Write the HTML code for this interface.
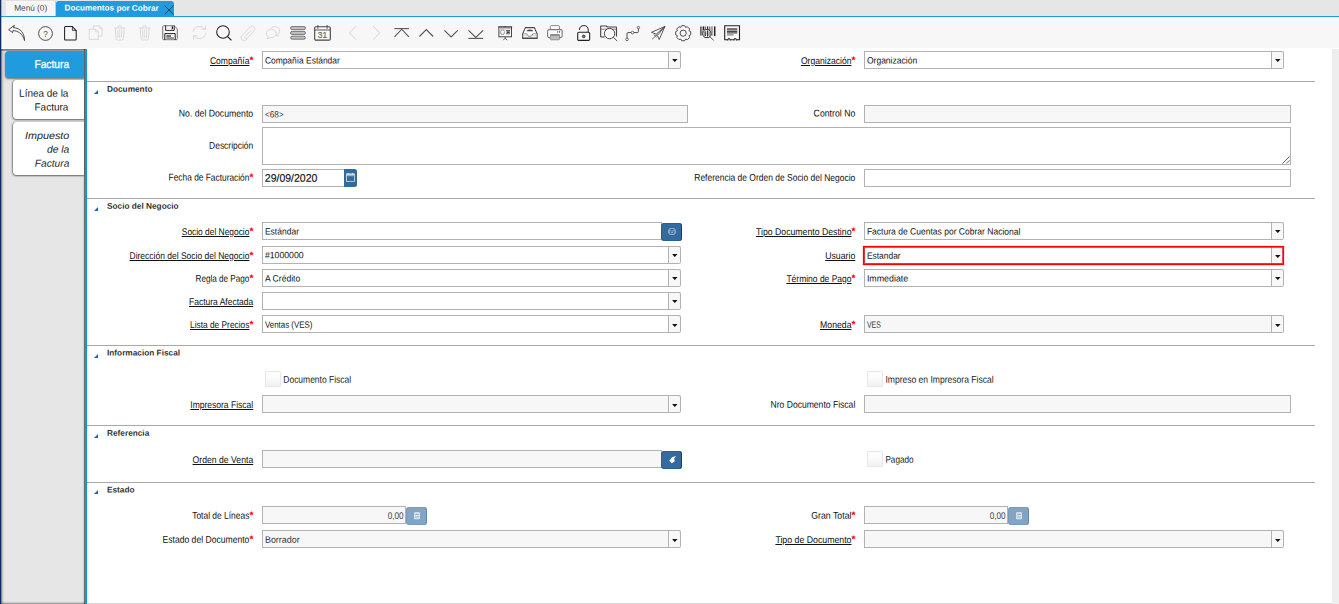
<!DOCTYPE html>
<html lang="es"><head><meta charset="utf-8"><title>Documentos por Cobrar</title>
<style>
html,body{margin:0;padding:0}
body{width:1339px;height:604px;position:relative;overflow:hidden;background:#fff;
 font-family:"Liberation Sans",sans-serif;}
.b{position:absolute;box-sizing:border-box}
.t{position:absolute;left:0;top:0;white-space:nowrap;line-height:12px;display:block;transform-origin:0 0;text-underline-offset:1px;text-decoration-thickness:1px}
.in{border:1px solid #b2b2b2;background:#fff}
.ro{background:#f7f7f7}
.cb{border:1px solid #b2b2b2;border-left:none;background:#f8f8f8;border-radius:0 2.2px 2.2px 0}
.ar{position:absolute;width:0;height:0;border-left:2.7px solid transparent;border-right:2.7px solid transparent;border-top:3px solid #111}
.sep{background:#a9a9a9;height:1px}
.chk{border:1px solid #e8e8e8;background:linear-gradient(#fdfdfd 30%,#f1f1f1);border-radius:1px}
.btn{background:#336b9e;border-radius:3px;box-shadow:inset -1px 0 0 rgba(8,40,85,.6),inset 0 0 0 1px rgba(15,60,100,.22)}
.btnd{background:#83a5c3;border-radius:3px;box-shadow:inset -1px 0 0 rgba(60,100,140,.35),inset 0 0 0 1px rgba(60,110,150,.18)}
.tri{position:absolute;width:0;height:0;border-left:4px solid transparent;border-bottom:4.2px solid #1c63c9}
svg{position:absolute;overflow:visible}
</style></head><body>

<div class="b" style="left:0.00px;top:0.00px;width:1339.00px;height:16.00px;background:#e6e6e6"></div>
<div class="b" style="left:0.00px;top:17.00px;width:1339.00px;height:31.00px;background:#f7f7f7"></div>
<div class="b" style="left:0.00px;top:15.80px;width:1339.00px;height:1.20px;background:#1f9bde"></div>
<div class="b" style="left:6.00px;top:1.00px;width:49.00px;height:15.00px;background:#f6f6f6;box-shadow:1px 0 1px rgba(0,0,0,.12)"></div>
<span class="t" style="font-size:8.25px;color:#4a4a4a;transform:translate(14.20px,2.70px) scaleX(0.9995) rotate(.03deg);">Menú (0)</span>
<div class="b" style="left:56.10px;top:0.90px;width:118.10px;height:16.10px;background:#1f9bde;border-radius:3px 3px 0 0"></div>
<span class="t" style="font-size:8.2px;color:#fff;font-weight:bold;transform:translate(64.60px,2.60px) scaleX(0.9992) rotate(.03deg);">Documentos por Cobrar</span>
<svg style="left:163.5px;top:4.6px" width="10" height="10" viewBox="0 0 10 10"><path d="M0.6 0.6 L9.6 9.4 M9.6 0.6 L0.6 9.4" stroke="#0c3a5a" stroke-width="0.9" fill="none"/></svg>
<div class="b" style="left:1.00px;top:49.00px;width:84.00px;height:555.00px;background:#e6e6e6;box-shadow:inset 3px 0 2px -1px rgba(0,0,0,.22),inset -1px 0 0 rgba(0,0,0,.44),inset -2px 0 1px rgba(0,0,0,.1),inset 0 -2px 2px -1px rgba(0,0,0,.4)"></div>
<div class="b" style="left:1.00px;top:49.00px;width:84.00px;height:1.00px;background:rgba(40,30,25,.5)"></div>
<div class="b" style="left:1.00px;top:50.00px;width:84.00px;height:1.00px;background:rgba(40,30,25,.38)"></div>
<div class="b" style="left:0.00px;top:0.00px;width:1.00px;height:604.00px;background:#0b2c5f"></div>
<div class="b" style="left:1.00px;top:0.00px;width:1.00px;height:604.00px;background:rgba(11,44,95,.3)"></div>
<div class="b" style="left:5.00px;top:51.00px;width:79.20px;height:25.80px;background:#1f9bde;border-radius:3.5px 0 0 3.5px;box-shadow:0 1.5px 2px rgba(0,0,0,.5)"></div>
<span class="t" style="font-size:11.4px;color:#fff;transform:translate(34.40px,58.00px) scaleX(0.9010) rotate(.03deg);-webkit-text-stroke:.3px #fff;">Factura</span>
<div class="b" style="left:12.80px;top:79.90px;width:71.40px;height:39.50px;background:#fff;border-radius:3.5px 0 0 3.5px;box-shadow:0 1px 2px rgba(0,0,0,.55),-1px 0 1.5px rgba(0,0,0,.3)"></div>
<span class="t" style="font-size:10.4px;color:#222;transform:translate(19.10px,87.80px) scaleX(0.9587) rotate(.03deg);">Línea de la</span>
<span class="t" style="font-size:10.4px;color:#222;transform:translate(34.50px,101.40px) scaleX(0.9621) rotate(.03deg);">Factura</span>
<div class="b" style="left:12.80px;top:122.10px;width:71.40px;height:53.30px;background:#fff;border-radius:3.5px 0 0 3.5px;box-shadow:0 1px 2px rgba(0,0,0,.55),-1px 0 1.5px rgba(0,0,0,.3)"></div>
<span class="t" style="font-size:10.2px;color:#222;font-style:italic;transform:translate(24.90px,129.90px) scaleX(1.0595) rotate(.03deg);">Impuesto</span>
<span class="t" style="font-size:10.2px;color:#222;font-style:italic;transform:translate(46.90px,143.80px) scaleX(1.0139) rotate(.03deg);">de la</span>
<span class="t" style="font-size:10.2px;color:#222;font-style:italic;transform:translate(34.80px,157.70px) scaleX(0.9986) rotate(.03deg);">Factura</span>
<div class="b" style="left:85.00px;top:48.80px;width:2.00px;height:555.20px;background:#0f97dc"></div>
<div class="b" style="left:1332.00px;top:48.80px;width:7.00px;height:555.20px;background:#eeeeee"></div>
<div class="b" style="left:87.00px;top:602.60px;width:1245.00px;height:1.40px;background:#d9d9d9"></div>
<svg style="left:7.80px;top:24.80px" width="17.2" height="16.1" viewBox="0 0 17.2 16.1"><path d="M6.1 0.5 L0.6 4.7 L4.6 7.6 L4.9 5.6 C9.5 5.6 14.8 8.6 16.6 15.6 C16.4 8.2 12.6 3 5.7 2.6 Z" fill="none" stroke-linecap="round" stroke-linejoin="round" stroke="#444" stroke-width="0.95"/></svg>
<svg style="left:38.20px;top:25.80px" width="15" height="15" viewBox="0 0 15 15"><circle cx="7.5" cy="7.5" r="6.9" fill="none" stroke="#444" stroke-width="0.95"/><text x="7.5" y="10.5" font-family="Liberation Sans, sans-serif" font-size="8.2" fill="#4a4a4a" text-anchor="middle">?</text></svg>
<svg style="left:64.15px;top:25.70px" width="12.8" height="14.6" viewBox="0 0 12.8 14.6"><path d="M0.6 1.4 Q0.6 0.6 1.4 0.6 L8.4 0.6 L12.2 4.6 L12.2 13.2 Q12.2 14 11.4 14 L1.4 14 Q0.6 14 0.6 13.2 Z" fill="none" stroke-linecap="round" stroke-linejoin="round" stroke="#222" stroke-width="1.05"/><path d="M8.4 0.8 L8.4 4.4 L12 4.4" fill="none" stroke-linecap="round" stroke-linejoin="round" stroke="#222" stroke-width="0.8"/></svg>
<svg style="left:88.80px;top:25.00px" width="13.6" height="15" viewBox="0 0 13.6 15"><path d="M4.4 3.6 L4.4 0.8 L10.4 0.8 L13 3.4 L13 11.2 L9.4 11.2" fill="none" stroke-linecap="round" stroke-linejoin="round" stroke="#d6d6d6" stroke-width="0.9"/><path d="M10.4 0.9 L10.4 3.4 L12.9 3.4" fill="none" stroke-linecap="round" stroke-linejoin="round" stroke="#d6d6d6" stroke-width="0.7"/><path d="M0.6 4.2 L6.6 4.2 L9.2 6.8 L9.2 14.4 L0.6 14.4 Z" fill="none" stroke-linecap="round" stroke-linejoin="round" stroke="#d6d6d6" stroke-width="0.9"/><path d="M6.6 4.3 L6.6 6.8 L9.1 6.8" fill="none" stroke-linecap="round" stroke-linejoin="round" stroke="#d6d6d6" stroke-width="0.7"/></svg>
<svg style="left:114.10px;top:25.00px" width="11.4" height="15.6" viewBox="0 0 11.4 15.6"><path d="M0.5 3 L10.9 3 M3.6 2.8 Q3.8 0.6 5.7 0.6 Q7.6 0.6 7.8 2.8" fill="none" stroke-linecap="round" stroke-linejoin="round" stroke="#d6d6d6" stroke-width="0.9"/><path d="M1.3 3.2 L2 13.8 Q2.1 15 3.2 15 L8.2 15 Q9.3 15 9.4 13.8 L10.1 3.2" fill="none" stroke-linecap="round" stroke-linejoin="round" stroke="#d6d6d6" stroke-width="0.9"/><path d="M3.7 5 L3.9 13 M5.7 5 L5.7 13 M7.7 5 L7.5 13" fill="none" stroke-linecap="round" stroke-linejoin="round" stroke="#d6d6d6" stroke-width="0.8"/></svg>
<svg style="left:139.20px;top:25.00px" width="11.4" height="15.6" viewBox="0 0 11.4 15.6"><path d="M0.5 3 L10.9 3 M3.6 2.8 Q3.8 0.6 5.7 0.6 Q7.6 0.6 7.8 2.8" fill="none" stroke-linecap="round" stroke-linejoin="round" stroke="#d6d6d6" stroke-width="0.9"/><path d="M1.3 3.2 L2 13.8 Q2.1 15 3.2 15 L8.2 15 Q9.3 15 9.4 13.8 L10.1 3.2" fill="none" stroke-linecap="round" stroke-linejoin="round" stroke="#d6d6d6" stroke-width="0.9"/><path d="M3.7 5 L3.9 13 M5.7 5 L5.7 13 M7.7 5 L7.5 13" fill="none" stroke-linecap="round" stroke-linejoin="round" stroke="#d6d6d6" stroke-width="0.8"/></svg>
<svg style="left:161.70px;top:25.15px" width="16" height="15.4" viewBox="0 0 16 15.4"><path d="M1.6 0.7 L12 0.7 L15.3 3.8 L15.3 13.7 Q15.3 14.7 14.3 14.7 L1.6 14.7 Q0.7 14.7 0.7 13.7 L0.7 1.7 Q0.7 0.7 1.6 0.7 Z" fill="#f6f6f6" stroke="#707070" stroke-width="0.95" stroke-linejoin="round"/><path d="M3.6 0.9 L3.6 5.4 L12.2 5.4 L12.2 0.9" fill="none" stroke-linecap="round" stroke-linejoin="round" stroke="#222" stroke-width="0.95"/><rect x="9.7" y="1.4" width="1.3" height="2.8" fill="#222"/><path d="M2.8 14.5 L2.8 8.6 L13.2 8.6 L13.2 14.5" fill="none" stroke-linecap="round" stroke-linejoin="round" stroke="#222" stroke-width="1.0"/><rect x="4.4" y="12" width="7.4" height="2.5" fill="#9a9a9a"/><rect x="4.4" y="10.4" width="4.6" height="1.2" fill="#222"/></svg>
<svg style="left:191.50px;top:25.20px" width="15" height="15" viewBox="0 0 15 15"><path d="M1 6.6 A6.6 6.6 0 0 1 13 4.2 M14 8.4 A6.6 6.6 0 0 1 2 10.8" fill="none" stroke-linecap="round" stroke-linejoin="round" stroke="#d6d6d6" stroke-width="0.9"/><path d="M13.6 0.8 L13.4 4.4 L9.8 4.2 M1.4 14.2 L1.6 10.6 L5.2 10.8" fill="none" stroke-linecap="round" stroke-linejoin="round" stroke="#d6d6d6" stroke-width="0.9"/></svg>
<svg style="left:215.60px;top:25.00px" width="15.6" height="15.6" viewBox="0 0 15.6 15.6"><circle cx="7" cy="7" r="6.3" fill="none" stroke="#222" stroke-width="1.05"/><path d="M11.6 11.6 L15.1 15" fill="none" stroke-linecap="round" stroke-linejoin="round" stroke="#222" stroke-width="1.1"/></svg>
<svg style="left:240.40px;top:25.00px" width="15.6" height="16" viewBox="0 0 15.6 16"><path d="M11.2 5.4 L5.2 11.4 Q4.2 12.6 5.2 13.4 Q6.2 14.2 7.2 13.2 L14.2 5.8 Q16 3.6 14.2 1.8 Q12.2 0 10.2 2 L2.2 10.2 Q-0.4 13 2 15 Q4.6 16.8 7 14.4" fill="none" stroke-linecap="round" stroke-linejoin="round" stroke="#d6d6d6" stroke-width="0.9"/></svg>
<svg style="left:265.40px;top:25.90px" width="15" height="13.6" viewBox="0 0 15 13.6"><path d="M5.4 2.8 A5 4.4 0 1 1 12.6 8.6 L13.4 10.2 L11 9.4" fill="none" stroke-linecap="round" stroke-linejoin="round" stroke="#d6d6d6" stroke-width="0.9"/><path d="M2.2 12.8 L3 10.6 A4.9 4.2 0 1 1 5.2 11.6 Z" fill="#f7f7f7" stroke="#d6d6d6" stroke-width="0.9" stroke-linejoin="round"/></svg>
<svg style="left:290.00px;top:26.00px" width="16" height="13.8" viewBox="0 0 16 13.8"><rect x="0.6" y="0.6" width="14.8" height="3.0" rx="1.5" fill="#c2c2c2" stroke="#555" stroke-width="0.75"/><rect x="0.6" y="5.4" width="14.8" height="3.0" rx="1.5" fill="#c2c2c2" stroke="#555" stroke-width="0.75"/><rect x="0.6" y="10.2" width="14.8" height="3.0" rx="1.5" fill="#c2c2c2" stroke="#555" stroke-width="0.75"/></svg>
<svg style="left:313.95px;top:25.10px" width="17" height="15.8" viewBox="0 0 17 15.8"><rect x="0.7" y="1.7" width="15.6" height="13.4" rx="1.2" fill="#fafafa" stroke="#444" stroke-width="1.1"/><path d="M0.8 5 L16.2 5" stroke="#444" stroke-width="0.9"/><path d="M3.9 0.4 L3.9 3.4 M13.1 0.4 L13.1 3.4" stroke="#444" stroke-width="0.9" stroke-linecap="round"/><text x="8.5" y="13.4" font-family="Liberation Sans, sans-serif" font-size="8.4" fill="#666" text-anchor="middle" stroke="#666" stroke-width="0.2">31</text></svg>
<svg style="left:348.60px;top:26.00px" width="7.2" height="13.8" viewBox="0 0 7.2 13.8"><path d="M6.8 0.4 L0.5 6.9 L6.8 13.4" fill="none" stroke-linecap="round" stroke-linejoin="round" stroke="#cfcfcf" stroke-width="0.9"/></svg>
<svg style="left:372.80px;top:26.00px" width="7.2" height="13.8" viewBox="0 0 7.2 13.8"><path d="M0.4 0.4 L6.7 6.9 L0.4 13.4" fill="none" stroke-linecap="round" stroke-linejoin="round" stroke="#cfcfcf" stroke-width="0.9"/></svg>
<svg style="left:393.70px;top:27.60px" width="15.4" height="9.4" viewBox="0 0 15.4 9.4"><path d="M0.4 0.6 L15 0.6" stroke="#555" stroke-width="1.1"/><path d="M0.5 8.9 L7.7 1.2 L14.9 8.9" fill="none" stroke="#555" stroke-width="1.1" stroke-linejoin="miter"/></svg>
<svg style="left:418.70px;top:29.05px" width="14.6" height="7.9" viewBox="0 0 14.6 7.9"><path d="M0.4 7.5 L7.3 0.5 L14.2 7.5" fill="none" stroke="#555" stroke-width="1.1"/></svg>
<svg style="left:443.70px;top:29.50px" width="14.2" height="7.4" viewBox="0 0 14.2 7.4"><path d="M0.4 0.4 L7.1 7 L13.8 0.4" fill="none" stroke="#555" stroke-width="1.1"/></svg>
<svg style="left:467.70px;top:29.90px" width="15.6" height="9" viewBox="0 0 15.6 9"><path d="M0.5 0.4 L7.8 7.4 L15.1 0.4" fill="none" stroke="#555" stroke-width="1.1"/><path d="M0.4 8.4 L15.2 8.4" stroke="#555" stroke-width="1.1"/></svg>
<svg style="left:497.80px;top:25.70px" width="14.4" height="14.6" viewBox="0 0 14.4 14.6"><path d="M0.3 0.9 L14.1 0.9" stroke="#444" stroke-width="1.3"/><rect x="6.4" y="0" width="1.6" height="0.8" fill="#444"/><rect x="0.9" y="1.4" width="12.6" height="9.4" fill="#fafafa" stroke="#444" stroke-width="1"/><rect x="1.4" y="1.6" width="11.6" height="1.9" fill="#c4c4c4"/><rect x="2.7" y="3.9" width="3.6" height="4.6" rx="1.4" fill="#fff" stroke="#8a8a8a" stroke-width="0.9"/><path d="M8 4.6 L12 4.6 M8 7.8 L11.8 7.8" stroke="#666" stroke-width="1.1"/><rect x="8.6" y="5.4" width="3.2" height="1.8" fill="#444"/><path d="M7.2 11 L7.2 12.4 M5.2 14.2 L7.2 12.2 L9.2 14.2" fill="none" stroke="#444" stroke-width="0.9"/></svg>
<svg style="left:521.70px;top:27.00px" width="15.8" height="12" viewBox="0 0 15.8 12"><path d="M3.4 0.6 L12.4 0.6 L15.2 7 L15.2 11.3 L0.6 11.3 L0.6 7 Z" fill="#fbfbfb" stroke="#444" stroke-width="1.05" stroke-linejoin="round"/><path d="M4.8 3.6 Q7.9 1.6 11 3.6 L11 4.3 L4.8 4.3 Z" fill="#444"/><path d="M0.8 6.8 L5 6.8 Q5.4 9.6 7.9 9.6 Q10.4 9.6 10.8 6.8 L15 6.8" fill="none" stroke="#8a8a8a" stroke-width="0.9"/><path d="M0.7 8.7 L15.1 8.7" stroke="#c4c4c4" stroke-width="0.8"/><path d="M0.6 11.3 L15.2 11.3" stroke="#444" stroke-width="1.2"/></svg>
<svg style="left:546.70px;top:25.15px" width="15.8" height="15.4" viewBox="0 0 15.8 15.4"><path d="M3.3 4.6 L3.3 1.4 Q3.3 0.6 4.1 0.6 L11.7 0.6 Q12.5 0.6 12.5 1.4 L12.5 4.6" fill="#fbfbfb" stroke="#8c8c8c" stroke-width="1"/><rect x="0.6" y="4.6" width="14.6" height="8" rx="1.6" fill="#fbfbfb" stroke="#7a7a7a" stroke-width="1.1"/><rect x="10.2" y="6.4" width="1.1" height="1.1" fill="#2a2a2a"/><rect x="12" y="6.4" width="1.1" height="1.1" fill="#2a2a2a"/><path d="M3.2 10 L12.6 10" stroke="#444" stroke-width="1.2"/><path d="M3.3 10.4 L3.3 14 Q3.3 14.8 4.1 14.8 L11.7 14.8 Q12.5 14.8 12.5 14 L12.5 10.4 Z" fill="#bdbdbd" stroke="#8c8c8c" stroke-width="0.9"/></svg>
<svg style="left:576.80px;top:24.80px" width="13.4" height="16.1" viewBox="0 0 13.4 16.1"><path d="M2.4 4.6 Q2.6 0.6 6.9 0.6 Q11.2 0.6 11.2 5 L11.2 7.2" fill="none" stroke="#222" stroke-width="1.0" stroke-linecap="round"/><rect x="0.7" y="7.3" width="12" height="8.1" rx="1.2" fill="#fafafa" stroke="#222" stroke-width="1.1"/><circle cx="6.7" cy="11.4" r="1.4" fill="#777" stroke="#222" stroke-width="0.7"/></svg>
<svg style="left:599.90px;top:25.00px" width="17.2" height="16" viewBox="0 0 17.2 16"><path d="M0.7 12 L0.7 1 L6.2 1 L7.4 2 L16 2 Q16.5 2 16.5 2.6 L16.5 11.6" fill="none" stroke="#444" stroke-width="1.1" stroke-linejoin="round"/><path d="M0.8 4.2 L16.4 4.2" stroke="#777" stroke-width="0.9"/><path d="M0.7 12 L4.6 12" stroke="#444" stroke-width="1.1"/><circle cx="9.6" cy="8.6" r="5.2" fill="#f9f9f9" stroke="#444" stroke-width="1"/><path d="M13.6 12.6 L16.9 15.7" stroke="#444" stroke-width="0.95" stroke-linecap="round"/></svg>
<svg style="left:625.20px;top:25.50px" width="15" height="15" viewBox="0 0 15 15"><path d="M2 12.2 L2 7.6 Q2 6.6 3 6.6 L6.2 6.6 M8.8 6.6 L12.4 6.6 Q13.4 6.6 13.4 5.6 L13.4 3" fill="none" stroke="#444" stroke-width="0.95"/><circle cx="7.5" cy="6.6" r="1.3" fill="#fff" stroke="#444" stroke-width="0.8"/><circle cx="13.4" cy="1.6" r="1.2" fill="#fff" stroke="#444" stroke-width="0.8"/><circle cx="2" cy="13.4" r="1.3" fill="#fff" stroke="#444" stroke-width="0.8"/></svg>
<svg style="left:650.90px;top:25.60px" width="14.4" height="14.4" viewBox="0 0 14.4 14.4"><path d="M13.9 0.5 L0.5 6.3 L5.2 8.2 L13.9 0.5 L8.2 13.6 L6.4 9.4 Z" fill="none" stroke="#444" stroke-width="0.9" stroke-linejoin="round"/><path d="M1.4 13 L6.2 8.6 M3 8.8 L5.4 10.8" stroke="#444" stroke-width="0.8" stroke-linecap="round"/></svg>
<svg style="left:674.50px;top:24.75px" width="16.4" height="16.4" viewBox="0 0 16.4 16.4"><path d="M6.67 0.65 L9.73 0.65 L10.60 2.37 L10.63 2.39 L12.45 1.78 L14.62 3.95 L14.01 5.77 L14.03 5.80 L15.75 6.67 L15.75 9.73 L14.03 10.60 L14.01 10.63 L14.62 12.45 L12.45 14.62 L10.63 14.01 L10.60 14.03 L9.73 15.75 L6.67 15.75 L5.80 14.03 L5.77 14.01 L3.95 14.62 L1.78 12.45 L2.39 10.63 L2.37 10.60 L0.65 9.73 L0.65 6.67 L2.37 5.80 L2.39 5.77 L1.78 3.95 L3.95 1.78 L5.77 2.39 L5.80 2.37 Z" fill="none" stroke="#444" stroke-width="0.95" stroke-linejoin="round"/><circle cx="8.2" cy="8.2" r="3.1" fill="none" stroke="#444" stroke-width="0.95"/></svg>
<svg style="left:699.80px;top:25.70px" width="15.8" height="14.6" viewBox="0 0 15.8 14.6"><path d="M0.9 0.4 L0.9 9.6" stroke="#333" stroke-width="1.3"/><path d="M2.3 0.4 L2.3 9.2" stroke="#999" stroke-width="0.9"/><path d="M3.6 0.4 L3.6 4" stroke="#222" stroke-width="1.4"/><path d="M5.6 0.4 L5.6 3.2" stroke="#555" stroke-width="0.9"/><path d="M7.6 0.4 L7.6 3.4" stroke="#333" stroke-width="1.3"/><path d="M9.8 0.4 L9.8 4.4" stroke="#555" stroke-width="1.1"/><path d="M12 0.4 L12 9.6" stroke="#555" stroke-width="1"/><path d="M14.7 0.4 L14.7 10" stroke="#222" stroke-width="1.5"/><circle cx="6.9" cy="7.6" r="4.1" fill="#f1f1f1" stroke="#2a2a2a" stroke-width="1"/><path d="M5.2 5.2 L5.2 10 M7.6 4.6 L7.6 10.6" stroke="#333" stroke-width="1.3"/><path d="M9.4 5.4 L9.4 9.8" stroke="#777" stroke-width="0.8"/><path d="M10 10.8 L13.4 14.2" stroke="#444" stroke-width="0.9" stroke-linecap="round"/></svg>
<svg style="left:724.00px;top:24.80px" width="16.2" height="16.1" viewBox="0 0 16.2 16.1"><path d="M0.7 14.7 L0.7 0.7 L15.5 0.7 L15.5 14.7 L12.3 14.7 Q12 13.5 11.2 13.5 Q10.4 13.5 10.1 14.7 L6.1 14.7 Q5.8 13.5 5 13.5 Q4.2 13.5 3.9 14.7 Z" fill="#fafafa" stroke="#222" stroke-width="1.1" stroke-linejoin="miter"/><path d="M2.9 3.7 L13.3 3.7 M2.9 5.1 L13.3 5.1 M2.9 6.5 L13.3 6.5 M2.9 7.9 L13.3 7.9" stroke="#4a4a4a" stroke-width="1.05"/><path d="M2.9 9.9 L9.6 9.9" stroke="#555" stroke-width="0.9"/><path d="M3.6 15.6 L4.2 14.9 M10.4 14.9 L9.9 15.6 M5.8 14.9 L6.4 15.6 M12.1 14.9 L12.7 15.6" stroke="#222" stroke-width="0.7"/></svg>
<span class="t" style="font-size:9.76px;color:#111;text-decoration:underline;transform:translate(209.90px,55.00px) scaleX(0.8781) rotate(.03deg);">Compañía</span>
<span class="t" style="font-size:10.2px;color:#f00;font-weight:bold;transform:translate(249.50px,54.60px) scaleX(1.0000) rotate(.03deg);">*</span>
<div class="b in" style="left:262.00px;top:51.00px;width:407.00px;height:18.00px;"></div>
<div class="b cb" style="left:669.00px;top:51.00px;width:12.00px;height:18.00px;"></div>
<svg style="left:671.70px;top:59.30px" width="5.6" height="3" viewBox="0 0 5.6 3"><path d="M0.1 0 L5.5 0 L3.1 2.8 Q2.8 3.1 2.5 2.8 Z" fill="#111"/></svg>
<span class="t" style="font-size:9.2px;color:#111;transform:translate(264.90px,54.55px) scaleX(0.9166) rotate(.03deg);">Compañía Estándar</span>
<span class="t" style="font-size:9.76px;color:#111;text-decoration:underline;transform:translate(800.90px,55.00px) scaleX(0.8807) rotate(.03deg);">Organización</span>
<span class="t" style="font-size:10.2px;color:#f00;font-weight:bold;transform:translate(851.60px,54.60px) scaleX(1.0000) rotate(.03deg);">*</span>
<div class="b in" style="left:864.00px;top:51.00px;width:408.00px;height:18.00px;"></div>
<div class="b cb" style="left:1272.00px;top:51.00px;width:12.00px;height:18.00px;"></div>
<svg style="left:1274.70px;top:59.30px" width="5.6" height="3" viewBox="0 0 5.6 3"><path d="M0.1 0 L5.5 0 L3.1 2.8 Q2.8 3.1 2.5 2.8 Z" fill="#111"/></svg>
<span class="t" style="font-size:9.2px;color:#111;transform:translate(866.90px,54.55px) scaleX(0.9291) rotate(.03deg);">Organización</span>
<div class="b sep" style="left:87.00px;top:80.90px;width:1228.00px;height:1.00px;"></div>
<i class="tri" style="left:94px;top:89.70px"></i>
<span class="t" style="font-size:8.27px;color:#333;font-weight:bold;transform:translate(107.00px,83.70px) scaleX(1.0000) rotate(.03deg);">Documento</span>
<span class="t" style="font-size:9.76px;color:#111;transform:translate(178.80px,107.60px) scaleX(0.8914) rotate(.03deg);">No. del Documento</span>
<div class="b in ro" style="left:262.00px;top:105.00px;width:426.00px;height:18.00px;"></div>
<span class="t" style="font-size:9.2px;color:#333;transform:translate(264.90px,108.40px) scaleX(0.8925) rotate(.03deg);">&lt;68&gt;</span>
<span class="t" style="font-size:9.76px;color:#111;transform:translate(813.60px,107.60px) scaleX(0.8947) rotate(.03deg);">Control No</span>
<div class="b in ro" style="left:864.00px;top:105.00px;width:427.00px;height:18.00px;"></div>
<span class="t" style="font-size:9.76px;color:#111;transform:translate(209.10px,139.70px) scaleX(0.8658) rotate(.03deg);">Descripción</span>
<div class="b in" style="left:262.00px;top:127.00px;width:1029.00px;height:38.00px;"></div>
<svg style="left:1281.5px;top:155.5px" width="8" height="8" viewBox="0 0 8 8"><path d="M0.5 7.5 L7.5 0.5 M4.3 7.5 L7.5 4.3" stroke="#444" stroke-width="0.8" fill="none"/></svg>
<span class="t" style="font-size:9.76px;color:#111;transform:translate(168.60px,171.60px) scaleX(0.8567) rotate(.03deg);">Fecha de Facturación</span>
<span class="t" style="font-size:10.2px;color:#f00;font-weight:bold;transform:translate(249.50px,171.40px) scaleX(1.0000) rotate(.03deg);">*</span>
<div class="b in" style="left:262.20px;top:169.30px;width:82.80px;height:17.40px;"></div>
<div class="b" style="left:344.20px;top:169.30px;width:12.60px;height:17.40px;background:#336a9c;border-radius:0 2.5px 2.5px 0"></div>
<svg style="left:345.9px;top:173.2px" width="8.8" height="8.8" viewBox="0 0 8.8 8.8"><rect x="0.4" y="0.8" width="8" height="7.5" fill="none" stroke="#e3ebf3" stroke-width="0.75"/><path d="M0.4 2.7 L8.4 2.7" stroke="#e3ebf3" stroke-width="0.7"/><path d="M0.6 1.5 L8.2 1.5" stroke="#c6d6e6" stroke-width="1"/><path d="M2.3 0.2 L2.3 1.6 M6.5 0.2 L6.5 1.6" stroke="#f2f6fa" stroke-width="0.8"/></svg>
<span class="t" style="font-size:11.0px;color:#111;transform:translate(264.80px,171.80px) scaleX(0.9553) rotate(.03deg);-webkit-text-stroke:.15px #111;">29/09/2020</span>
<span class="t" style="font-size:9.76px;color:#111;transform:translate(694.30px,171.80px) scaleX(0.8685) rotate(.03deg);">Referencia de Orden de Socio del Negocio</span>
<div class="b in" style="left:864.00px;top:169.00px;width:427.00px;height:18.00px;"></div>
<div class="b sep" style="left:87.00px;top:197.90px;width:1228.00px;height:1.00px;"></div>
<i class="tri" style="left:94px;top:206.70px"></i>
<span class="t" style="font-size:8.27px;color:#333;font-weight:bold;transform:translate(107.00px,200.70px) scaleX(1.0000) rotate(.03deg);">Socio del Negocio</span>
<span class="t" style="font-size:9.76px;color:#111;text-decoration:underline;transform:translate(181.80px,226.00px) scaleX(0.8601) rotate(.03deg);">Socio del Negocio</span>
<span class="t" style="font-size:10.2px;color:#f00;font-weight:bold;transform:translate(249.50px,225.60px) scaleX(1.0000) rotate(.03deg);">*</span>
<div class="b in" style="left:262.00px;top:222.00px;width:400.00px;height:18.00px;"></div>
<span class="t" style="font-size:9.2px;color:#111;transform:translate(264.90px,225.40px) scaleX(0.9271) rotate(.03deg);">Estándar</span>
<div class="b btn" style="left:661.00px;top:223.00px;width:21.00px;height:18.00px;"></div>
<svg style="left:668px;top:228.1px" width="8" height="7" viewBox="0 0 8 7"><rect x="0.4" y="0.4" width="7.2" height="6.2" rx="3.2" ry="2.9" fill="none" stroke="#b4c9de" stroke-width="0.8"/><path d="M1.6 1.6 L1.6 5.2 M6.2 1.6 L6.2 5.2 M2.8 2 L2.8 3.6 Q2.8 5.4 4.4 5.2 L5 2" fill="none" stroke="#a9c0d7" stroke-width="0.6"/></svg>
<span class="t" style="font-size:9.76px;color:#111;text-decoration:underline;transform:translate(756.00px,226.00px) scaleX(0.8929) rotate(.03deg);">Tipo Documento Destino</span>
<span class="t" style="font-size:10.2px;color:#f00;font-weight:bold;transform:translate(851.60px,225.60px) scaleX(1.0000) rotate(.03deg);">*</span>
<div class="b in" style="left:864.00px;top:222.00px;width:408.00px;height:18.00px;"></div>
<div class="b cb" style="left:1272.00px;top:222.00px;width:12.00px;height:18.00px;"></div>
<svg style="left:1274.70px;top:230.30px" width="5.6" height="3" viewBox="0 0 5.6 3"><path d="M0.1 0 L5.5 0 L3.1 2.8 Q2.8 3.1 2.5 2.8 Z" fill="#111"/></svg>
<span class="t" style="font-size:9.2px;color:#111;transform:translate(866.90px,225.55px) scaleX(0.9283) rotate(.03deg);">Factura de Cuentas por Cobrar Nacional</span>
<span class="t" style="font-size:9.76px;color:#111;text-decoration:underline;transform:translate(129.50px,250.00px) scaleX(0.8709) rotate(.03deg);">Dirección del Socio del Negocio</span>
<span class="t" style="font-size:10.2px;color:#f00;font-weight:bold;transform:translate(249.50px,249.70px) scaleX(1.0000) rotate(.03deg);">*</span>
<div class="b in" style="left:262.00px;top:246.00px;width:407.00px;height:18.00px;"></div>
<div class="b cb" style="left:669.00px;top:246.00px;width:12.00px;height:18.00px;"></div>
<svg style="left:671.70px;top:254.00px" width="5.6" height="3" viewBox="0 0 5.6 3"><path d="M0.1 0 L5.5 0 L3.1 2.8 Q2.8 3.1 2.5 2.8 Z" fill="#111"/></svg>
<span class="t" style="font-size:9.2px;color:#111;transform:translate(264.90px,249.25px) scaleX(0.9464) rotate(.03deg);">#1000000</span>
<span class="t" style="font-size:9.76px;color:#111;text-decoration:underline;transform:translate(825.20px,250.00px) scaleX(0.8956) rotate(.03deg);">Usuario</span>
<div class="b in" style="left:864.00px;top:246.00px;width:408.00px;height:18.00px;"></div>
<div class="b cb" style="left:1272.00px;top:246.00px;width:12.00px;height:18.00px;"></div>
<svg style="left:1274.70px;top:254.50px" width="5.6" height="3" viewBox="0 0 5.6 3"><path d="M0.1 0 L5.5 0 L3.1 2.8 Q2.8 3.1 2.5 2.8 Z" fill="#111"/></svg>
<span class="t" style="font-size:9.2px;color:#111;transform:translate(866.90px,249.75px) scaleX(0.9189) rotate(.03deg);">Estandar</span>
<div class="b" style="left:863.00px;top:246.00px;width:421.00px;height:19.00px;border:1px solid #f00;box-shadow:inset 0 0 0 1px rgba(255,0,0,.7),0 0 0 1px rgba(255,0,0,.12)"></div>
<span class="t" style="font-size:9.76px;color:#111;transform:translate(195.50px,272.80px) scaleX(0.8355) rotate(.03deg);">Regla de Pago</span>
<span class="t" style="font-size:10.2px;color:#f00;font-weight:bold;transform:translate(249.50px,272.60px) scaleX(1.0000) rotate(.03deg);">*</span>
<div class="b in" style="left:262.00px;top:269.00px;width:407.00px;height:18.00px;"></div>
<div class="b cb" style="left:669.00px;top:269.00px;width:12.00px;height:18.00px;"></div>
<svg style="left:671.70px;top:277.20px" width="5.6" height="3" viewBox="0 0 5.6 3"><path d="M0.1 0 L5.5 0 L3.1 2.8 Q2.8 3.1 2.5 2.8 Z" fill="#111"/></svg>
<span class="t" style="font-size:9.2px;color:#111;transform:translate(264.90px,272.45px) scaleX(0.9366) rotate(.03deg);">A Crédito</span>
<span class="t" style="font-size:9.76px;color:#111;text-decoration:underline;transform:translate(786.40px,273.00px) scaleX(0.8704) rotate(.03deg);">Término de Pago</span>
<span class="t" style="font-size:10.2px;color:#f00;font-weight:bold;transform:translate(851.60px,272.60px) scaleX(1.0000) rotate(.03deg);">*</span>
<div class="b in" style="left:864.00px;top:269.00px;width:408.00px;height:18.00px;"></div>
<div class="b cb" style="left:1272.00px;top:269.00px;width:12.00px;height:18.00px;"></div>
<svg style="left:1274.70px;top:277.20px" width="5.6" height="3" viewBox="0 0 5.6 3"><path d="M0.1 0 L5.5 0 L3.1 2.8 Q2.8 3.1 2.5 2.8 Z" fill="#111"/></svg>
<span class="t" style="font-size:9.2px;color:#111;transform:translate(866.90px,272.45px) scaleX(0.9626) rotate(.03deg);">Immediate</span>
<span class="t" style="font-size:9.76px;color:#111;text-decoration:underline;transform:translate(189.00px,296.00px) scaleX(0.8709) rotate(.03deg);">Factura Afectada</span>
<div class="b in" style="left:262.00px;top:292.00px;width:407.00px;height:18.00px;"></div>
<div class="b cb" style="left:669.00px;top:292.00px;width:12.00px;height:18.00px;"></div>
<svg style="left:671.70px;top:300.30px" width="5.6" height="3" viewBox="0 0 5.6 3"><path d="M0.1 0 L5.5 0 L3.1 2.8 Q2.8 3.1 2.5 2.8 Z" fill="#111"/></svg>
<span class="t" style="font-size:9.76px;color:#111;text-decoration:underline;transform:translate(190.00px,319.00px) scaleX(0.8562) rotate(.03deg);">Lista de Precios</span>
<span class="t" style="font-size:10.2px;color:#f00;font-weight:bold;transform:translate(249.50px,318.80px) scaleX(1.0000) rotate(.03deg);">*</span>
<div class="b in" style="left:262.00px;top:315.00px;width:407.00px;height:18.00px;"></div>
<div class="b cb" style="left:669.00px;top:315.00px;width:12.00px;height:18.00px;"></div>
<svg style="left:671.70px;top:323.50px" width="5.6" height="3" viewBox="0 0 5.6 3"><path d="M0.1 0 L5.5 0 L3.1 2.8 Q2.8 3.1 2.5 2.8 Z" fill="#111"/></svg>
<span class="t" style="font-size:9.2px;color:#111;transform:translate(264.90px,318.75px) scaleX(0.8630) rotate(.03deg);">Ventas (VES)</span>
<span class="t" style="font-size:9.76px;color:#111;text-decoration:underline;transform:translate(820.10px,319.00px) scaleX(0.8912) rotate(.03deg);">Moneda</span>
<span class="t" style="font-size:10.2px;color:#f00;font-weight:bold;transform:translate(851.60px,318.80px) scaleX(1.0000) rotate(.03deg);">*</span>
<div class="b in ro" style="left:864.00px;top:315.00px;width:408.00px;height:18.00px;"></div>
<div class="b cb" style="left:1272.00px;top:315.00px;width:12.00px;height:18.00px;"></div>
<svg style="left:1274.70px;top:323.50px" width="5.6" height="3" viewBox="0 0 5.6 3"><path d="M0.1 0 L5.5 0 L3.1 2.8 Q2.8 3.1 2.5 2.8 Z" fill="#111"/></svg>
<span class="t" style="font-size:9.2px;color:#333;transform:translate(866.90px,318.75px) scaleX(0.7558) rotate(.03deg);">VES</span>
<div class="b sep" style="left:87.00px;top:345.00px;width:1228.00px;height:1.00px;"></div>
<i class="tri" style="left:94px;top:353.50px"></i>
<span class="t" style="font-size:8.27px;color:#333;font-weight:bold;transform:translate(107.00px,347.50px) scaleX(1.0000) rotate(.03deg);">Informacion Fiscal</span>
<div class="b chk" style="left:265.00px;top:371.00px;width:16.00px;height:16.00px;"></div>
<span class="t" style="font-size:9.76px;color:#222;transform:translate(283.30px,373.80px) scaleX(0.8689) rotate(.03deg);">Documento Fiscal</span>
<div class="b chk" style="left:867.00px;top:371.00px;width:16.00px;height:16.00px;"></div>
<span class="t" style="font-size:9.76px;color:#222;transform:translate(885.40px,373.80px) scaleX(0.8758) rotate(.03deg);">Impreso en Impresora Fiscal</span>
<span class="t" style="font-size:9.76px;color:#111;text-decoration:underline;transform:translate(190.30px,399.00px) scaleX(0.8729) rotate(.03deg);">Impresora Fiscal</span>
<div class="b in ro" style="left:262.00px;top:395.00px;width:407.00px;height:18.00px;"></div>
<div class="b cb" style="left:669.00px;top:395.00px;width:12.00px;height:18.00px;"></div>
<svg style="left:671.70px;top:403.60px" width="5.6" height="3" viewBox="0 0 5.6 3"><path d="M0.1 0 L5.5 0 L3.1 2.8 Q2.8 3.1 2.5 2.8 Z" fill="#111"/></svg>
<span class="t" style="font-size:9.76px;color:#111;transform:translate(770.50px,398.80px) scaleX(0.8792) rotate(.03deg);">Nro Documento Fiscal</span>
<div class="b in ro" style="left:864.00px;top:395.00px;width:427.00px;height:18.00px;"></div>
<div class="b sep" style="left:87.00px;top:424.80px;width:1228.00px;height:1.00px;"></div>
<i class="tri" style="left:94px;top:433.80px"></i>
<span class="t" style="font-size:8.27px;color:#333;font-weight:bold;transform:translate(107.00px,427.80px) scaleX(1.0000) rotate(.03deg);">Referencia</span>
<span class="t" style="font-size:9.76px;color:#111;text-decoration:underline;transform:translate(192.60px,454.00px) scaleX(0.8871) rotate(.03deg);">Orden de Venta</span>
<div class="b in ro" style="left:262.00px;top:450.00px;width:400.00px;height:18.00px;"></div>
<div class="b btn" style="left:661.00px;top:451.40px;width:21.00px;height:17.80px;"></div>
<svg style="left:668.6px;top:455.6px" width="7.2" height="7.4" viewBox="0 0 7.2 7.4"><path d="M7.1 0.2 C4.6 0.2 2.2 1.3 1.3 3.7 L0.1 4.2 L2.8 7.3 L6.1 4.9 L5.4 4.0 C5.0 2.8 5.7 1.3 7.1 0.2 Z" fill="#fff"/></svg>
<div class="b chk" style="left:867.00px;top:451.00px;width:16.00px;height:16.00px;"></div>
<span class="t" style="font-size:9.76px;color:#222;transform:translate(885.40px,453.70px) scaleX(0.8387) rotate(.03deg);">Pagado</span>
<div class="b sep" style="left:87.00px;top:481.70px;width:1228.00px;height:1.00px;"></div>
<i class="tri" style="left:94px;top:490.40px"></i>
<span class="t" style="font-size:8.27px;color:#333;font-weight:bold;transform:translate(107.00px,484.40px) scaleX(1.0000) rotate(.03deg);">Estado</span>
<span class="t" style="font-size:9.76px;color:#111;transform:translate(192.20px,509.70px) scaleX(0.8648) rotate(.03deg);">Total de Líneas</span>
<span class="t" style="font-size:10.2px;color:#f00;font-weight:bold;transform:translate(249.50px,509.50px) scaleX(1.0000) rotate(.03deg);">*</span>
<div class="b in ro" style="left:262.00px;top:506.00px;width:144.00px;height:18.00px;"></div>
<span class="t" style="font-size:9.7px;color:#444;transform:translate(387.70px,509.90px) scaleX(0.8431) rotate(.03deg);">0,00</span>
<div class="b btnd" style="left:406.00px;top:507.30px;width:21.00px;height:17.50px;"></div>
<span class="t" style="font-size:9.76px;color:#111;transform:translate(811.20px,509.70px) scaleX(0.8993) rotate(.03deg);">Gran Total</span>
<span class="t" style="font-size:10.2px;color:#f00;font-weight:bold;transform:translate(851.60px,509.50px) scaleX(1.0000) rotate(.03deg);">*</span>
<div class="b in ro" style="left:864.00px;top:506.00px;width:144.00px;height:18.00px;"></div>
<span class="t" style="font-size:9.7px;color:#444;transform:translate(989.70px,509.90px) scaleX(0.8431) rotate(.03deg);">0,00</span>
<div class="b btnd" style="left:1008.00px;top:507.30px;width:21.00px;height:17.50px;"></div>
<svg style="left:413.60px;top:512px" width="6" height="7.4" viewBox="0 0 6 7.4"><rect x="0.2" y="0.2" width="5.6" height="7" rx="0.6" fill="#e9eff5"/><rect x="1.1" y="1.7" width="3.8" height="1.1" fill="#83a5c3"/><rect x="1.1" y="3.6" width="3.8" height="2.8" fill="#b9cbdc"/></svg>
<svg style="left:1015.60px;top:512px" width="6" height="7.4" viewBox="0 0 6 7.4"><rect x="0.2" y="0.2" width="5.6" height="7" rx="0.6" fill="#e9eff5"/><rect x="1.1" y="1.7" width="3.8" height="1.1" fill="#83a5c3"/><rect x="1.1" y="3.6" width="3.8" height="2.8" fill="#b9cbdc"/></svg>
<span class="t" style="font-size:9.76px;color:#111;transform:translate(162.50px,533.80px) scaleX(0.8808) rotate(.03deg);">Estado del Documento</span>
<span class="t" style="font-size:10.2px;color:#f00;font-weight:bold;transform:translate(249.50px,533.60px) scaleX(1.0000) rotate(.03deg);">*</span>
<div class="b in ro" style="left:262.00px;top:530.00px;width:407.00px;height:18.00px;"></div>
<div class="b cb" style="left:669.00px;top:530.00px;width:12.00px;height:18.00px;"></div>
<svg style="left:671.70px;top:538.50px" width="5.6" height="3" viewBox="0 0 5.6 3"><path d="M0.1 0 L5.5 0 L3.1 2.8 Q2.8 3.1 2.5 2.8 Z" fill="#111"/></svg>
<span class="t" style="font-size:9.2px;color:#333;transform:translate(264.90px,533.75px) scaleX(0.9762) rotate(.03deg);">Borrador</span>
<span class="t" style="font-size:9.76px;color:#111;text-decoration:underline;transform:translate(775.40px,534.00px) scaleX(0.8981) rotate(.03deg);">Tipo de Documento</span>
<span class="t" style="font-size:10.2px;color:#f00;font-weight:bold;transform:translate(851.60px,533.60px) scaleX(1.0000) rotate(.03deg);">*</span>
<div class="b in ro" style="left:864.00px;top:530.00px;width:408.00px;height:18.00px;"></div>
<div class="b cb" style="left:1272.00px;top:530.00px;width:12.00px;height:18.00px;"></div>
<svg style="left:1274.70px;top:538.50px" width="5.6" height="3" viewBox="0 0 5.6 3"><path d="M0.1 0 L5.5 0 L3.1 2.8 Q2.8 3.1 2.5 2.8 Z" fill="#111"/></svg>
</body></html>
